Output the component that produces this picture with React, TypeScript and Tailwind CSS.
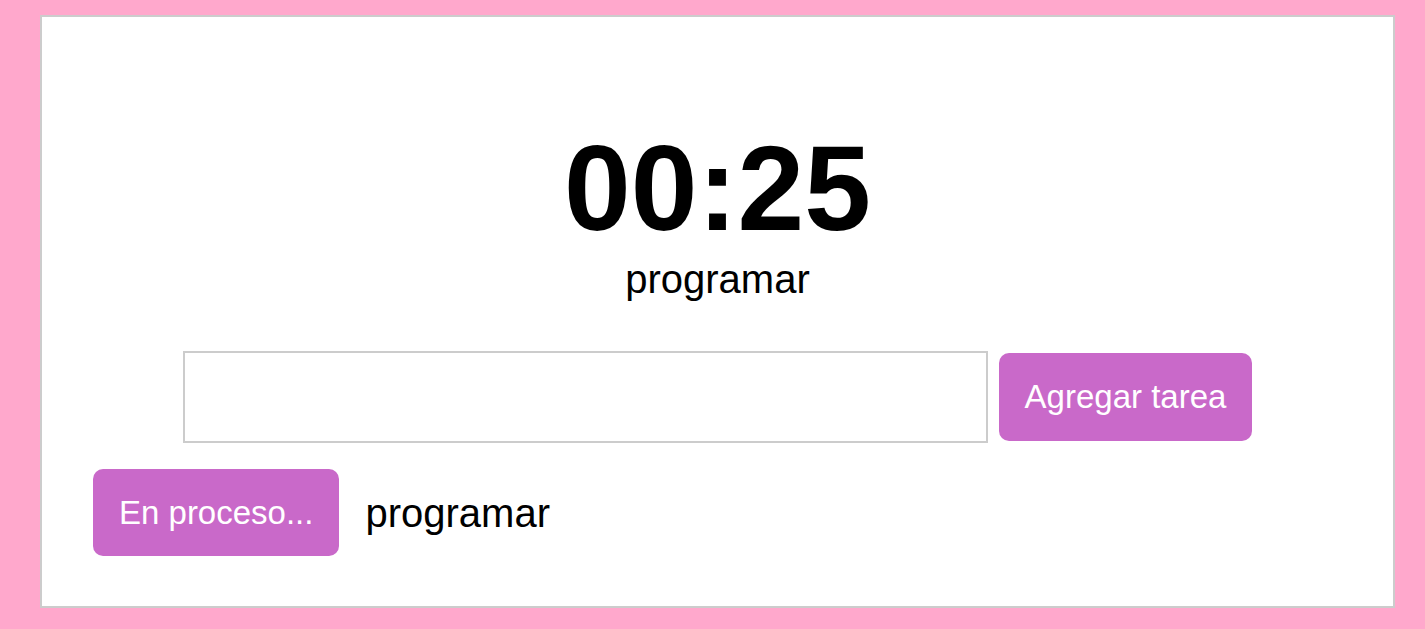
export default function App() {
  return (
    <div className="min-h-[629px] bg-[#ffa8cc] pt-[15px] pb-[21px] pl-[40px] pr-[30px] font-['Liberation_Sans',Arial,sans-serif]">
      <div className="flex h-[593px] flex-col border-2 border-[#cccccc] bg-white">
        {/* Timer */}
        <div className="mt-[111px] text-center text-[120px] leading-none font-bold text-black">00:25</div>
        <div className="mt-[11px] text-center text-[40px] leading-none text-black">programar</div>

        {/* Add task */}
        <div className="mt-[52px] flex items-center justify-center gap-[11px]">
          <input
            type="text"
            className="h-[92px] w-[805px] border-2 border-[#cccccc] bg-white px-3 text-[32px] outline-none"
          />
          <button className="h-[88px] rounded-[10px] bg-[#c969c9] px-[26px] text-[33px] text-white">
            Agregar tarea
          </button>
        </div>

        {/* Task list */}
        <div className="mt-[26px] ml-[51px] flex items-center gap-[26px]">
          <button className="h-[87px] rounded-[10px] bg-[#c969c9] px-[26px] text-[33px] text-white">
            En proceso...
          </button>
          <span className="text-[40px] leading-none text-black">programar</span>
        </div>
      </div>
    </div>
  );
}
